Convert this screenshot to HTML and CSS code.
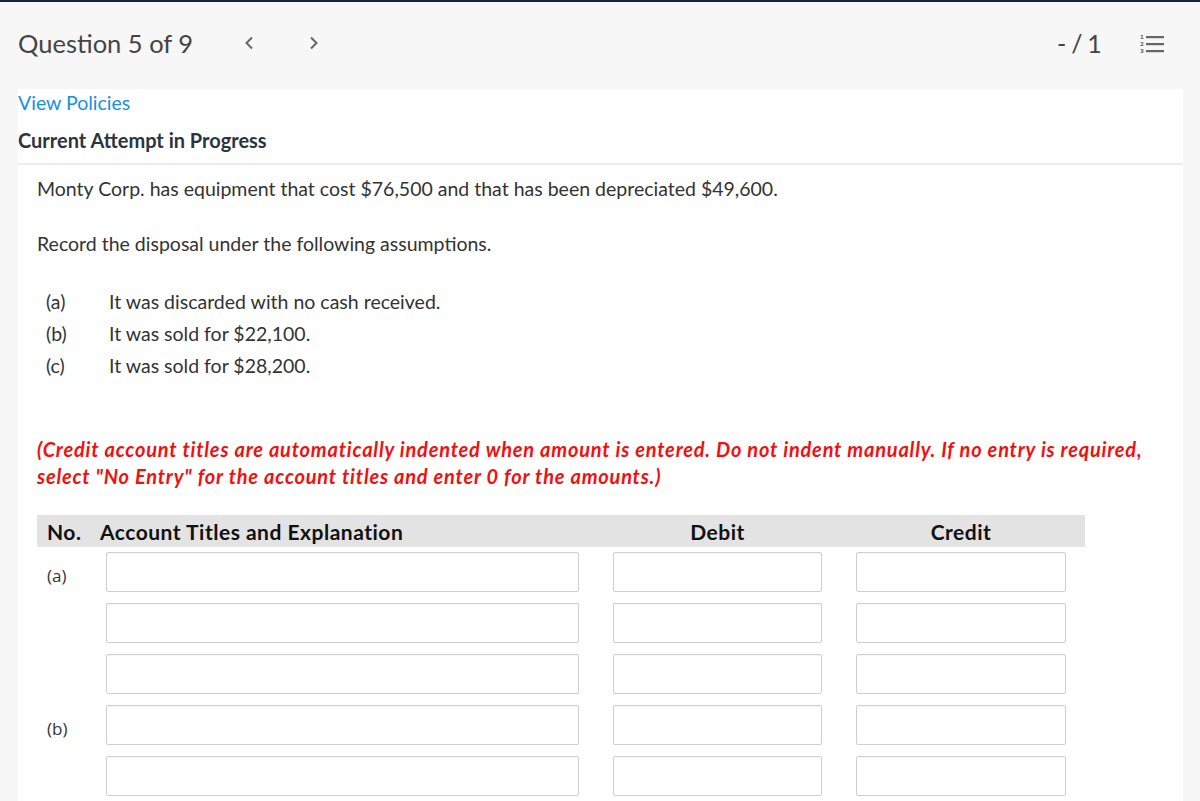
FILE: index.html
```html
<html lang="en">
<head>
    <meta charset="UTF-8">
    <meta name="viewport" content="width=device-width, initial-scale=1.0">
    <title>Question 5 of 9</title>
    <link rel="stylesheet" href="styles.css">
</head>
<body>
    <div class="topbar">
        <div class="qnav">
            <span class="qtitle">Question 5 of 9</span>
            <button type="button" class="arrow" aria-label="Previous">
                <svg width="12" height="14" viewBox="0 0 12 14"><path d="M9 1.5 L3.5 7 L9 12.5" fill="none" stroke="#666" stroke-width="2"/></svg>
            </button>
            <button type="button" class="arrow" aria-label="Next">
                <svg width="12" height="14" viewBox="0 0 12 14"><path d="M3 1.5 L8.5 7 L3 12.5" fill="none" stroke="#666" stroke-width="2"/></svg>
            </button>
        </div>
        <div class="score">
            <span class="points">- / 1</span>
            <svg class="listicon" width="26" height="20" viewBox="0 0 26 20">
                <text x="0" y="5" font-size="5.5" font-family="DejaVu Sans" font-weight="bold" fill="#666">1</text>
                <text x="0" y="12" font-size="5.5" font-family="DejaVu Sans" font-weight="bold" fill="#666">2</text>
                <text x="0" y="19" font-size="5.5" font-family="DejaVu Sans" font-weight="bold" fill="#666">3</text>
                <rect x="6" y="2" width="18" height="2.2" fill="#666"/>
                <rect x="6" y="9" width="18" height="2.2" fill="#666"/>
                <rect x="6" y="16" width="18" height="2.2" fill="#666"/>
            </svg>
        </div>
    </div>

    <div class="panel">
        <a class="policies" href="#">View Policies</a>
        <h2 class="attempt">Current Attempt in Progress</h2>

        <div class="question">
            <p class="intro">Monty Corp. has equipment that cost $76,500 and that has been depreciated $49,600.</p>
            <p class="intro">Record the disposal under the following assumptions.</p>

            <div class="cases">
                <div class="case"><span class="case-label">(a)</span><span>It was discarded with no cash received.</span></div>
                <div class="case"><span class="case-label">(b)</span><span>It was sold for $22,100.</span></div>
                <div class="case"><span class="case-label">(c)</span><span>It was sold for $28,200.</span></div>
            </div>

            <p class="note">(Credit account titles are automatically indented when amount is entered. Do not indent manually. If no entry is required, select "No Entry" for the account titles and enter 0 for the amounts.)</p>

            <div class="journal">
                <div class="jhead">
                    <span class="jno">No.</span>
                    <span class="jtitle">Account Titles and Explanation</span>
                    <span class="jamt">Debit</span>
                    <span class="jamt">Credit</span>
                </div>
                <div class="jrow">
                    <span class="rlabel">(a)</span>
                    <input type="text" class="field">
                    <input type="text" class="field">
                    <input type="text" class="field">
                </div>
                <div class="jrow">
                    <span class="rlabel"></span>
                    <input type="text" class="field">
                    <input type="text" class="field">
                    <input type="text" class="field">
                </div>
                <div class="jrow">
                    <span class="rlabel"></span>
                    <input type="text" class="field">
                    <input type="text" class="field">
                    <input type="text" class="field">
                </div>
                <div class="jrow">
                    <span class="rlabel">(b)</span>
                    <input type="text" class="field">
                    <input type="text" class="field">
                    <input type="text" class="field">
                </div>
                <div class="jrow">
                    <span class="rlabel"></span>
                    <input type="text" class="field">
                    <input type="text" class="field">
                    <input type="text" class="field">
                </div>
            </div>
        </div>
    </div>
</body>
</html>
```

FILE: styles.css
```css
body {
  margin: 0;
  height: 801px;
  background-color: #f7f7f7;
  font-family: "Lato", "Liberation Sans", sans-serif;
  color: #333;
  overflow: hidden;
}

.topbar {
  height: 89px;
  border-top: 2px solid #17233f;
  display: flex;
  align-items: center;
  justify-content: space-between;
  padding: 0 34px 6px 18px;
  box-sizing: border-box;
}

.qnav {
  display: flex;
  align-items: center;
}

.qtitle {
  font-size: 25.5px;
  color: #444;
  margin-right: 50px;
}

.arrow {
  background: none;
  border: none;
  padding: 0;
  margin-right: 53px;
  display: flex;
  cursor: pointer;
}

.score {
  display: flex;
  align-items: center;
}

.points {
  font-size: 25px;
  color: #444;
  margin-right: 39px;
  letter-spacing: -0.8px;
}

.listicon {
  display: block;
  margin-top: 2px;
}

.panel {
  background-color: #fff;
  margin: 0 17px 0 18px;
  padding-top: 2px;
  height: 710px;
  overflow: hidden;
}

.policies {
  display: block;
  font-size: 19.5px;
  line-height: 24px;
  color: #1690e0;
  text-decoration: none;
}

.attempt {
  margin: 13px 0 0 0;
  font-size: 20px;
  line-height: 24px;
  font-weight: bold;
  color: #2b3540;
  padding-bottom: 11px;
  border-bottom: 2px solid #ececec;
}

.question {
  padding: 0 0 0 19px;
}

.intro {
  margin: 11px 0 29px 0;
  font-size: 19.5px;
  line-height: 26px;
  color: #333;
}

.cases {
  margin-top: 14px;
}

.case {
  font-size: 19.5px;
  line-height: 32px;
  display: flex;
}

.case-label {
  width: 63px;
  padding-left: 9px;
}

.note {
  margin: 54px 0 0 0;
  font-size: 20px;
  line-height: 27px;
  font-style: italic;
  font-weight: bold;
  color: #f01010;
  letter-spacing: 0.78px;
  width: 1130px;
}

.journal {
  margin-top: 25px;
  width: 1048px;
}

.jhead {
  display: grid;
  grid-template-columns: 29px 479px 209px 210px;
  column-gap: 34px;
  align-items: center;
  height: 32px;
  background-color: #e3e3e3;
  font-size: 21px;
  font-weight: bold;
  letter-spacing: 0.5px;
  color: #111;
}

.jno {
  padding-left: 10px;
  white-space: nowrap;
}

.jamt {
  text-align: center;
}

.jrow {
  display: grid;
  grid-template-columns: 35px 473px 209px 210px;
  column-gap: 34px;
  margin-bottom: 11px;
}

.jhead + .jrow {
  margin-top: 5px;
}

.rlabel {
  padding: 12px 0 0 10px;
  font-family: "Open Sans", "Lato", sans-serif;
  font-size: 17px;
  color: #333;
  white-space: nowrap;
}

.field {
  height: 40px;
  box-sizing: border-box;
  border: 1px solid #cfcfcf;
  border-radius: 2px;
  box-shadow: inset 0 1px 1px rgba(0, 0, 0, 0.04);
  background-color: #fff;
  margin: 0;
}
```
